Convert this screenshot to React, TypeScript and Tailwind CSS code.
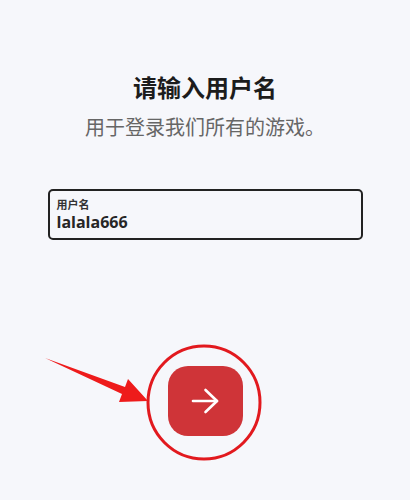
import React from "react";

export default function App() {
  return (
    <div className="relative w-[410px] h-[500px] bg-[#f6f7fb] flex flex-col items-center overflow-hidden font-['Noto_Sans','Noto_Sans_CJK_SC',sans-serif]">
      <h1 className="mt-[71px] text-[24px] leading-[32px] font-bold text-[#1c1c1c] font-['Noto_Sans_CJK_SC',sans-serif]">
        请输入用户名
      </h1>
      <p className="mt-[10px] text-[20px] leading-[28px] text-[#666666] font-['Noto_Sans_CJK_SC',sans-serif]">
        用于登录我们所有的游戏。
      </p>
      <div className="mt-[48px] w-[315px] h-[51px] border-2 border-[#222222] rounded-[5px] px-[7px] pt-[6px] flex flex-col">
        <div className="text-[11px] leading-[14px] font-bold text-[#333333] font-['Noto_Sans_CJK_SC',sans-serif]">
          用户名
        </div>
        <div className="mt-[1px] text-[16px] leading-[20px] font-bold text-[#262626] font-['Open_Sans',sans-serif]">
          lalala666
        </div>
      </div>
      <button className="mt-[126px] w-[75px] h-[70px] rounded-[20px] bg-[#cf3438] flex items-center justify-center">
        <svg width="30" height="28" viewBox="0 0 30 28" fill="none" stroke="#ffffff" strokeWidth="2.6" strokeLinecap="round" strokeLinejoin="round">
          <path d="M3 14h24" />
          <path d="M15.5 3 27 14 15.5 25" />
        </svg>
      </button>
      <svg className="absolute inset-0 pointer-events-none" width="410" height="500" viewBox="0 0 410 500">
        <ellipse cx="204" cy="402.5" rx="56" ry="56.5" fill="none" stroke="#e2191e" strokeWidth="3" />
        <polygon
          points="45,358 125,387 128,379 148,401 119,402 122,394"
          fill="#ee1b1b"
        />
      </svg>
    </div>
  );
}
